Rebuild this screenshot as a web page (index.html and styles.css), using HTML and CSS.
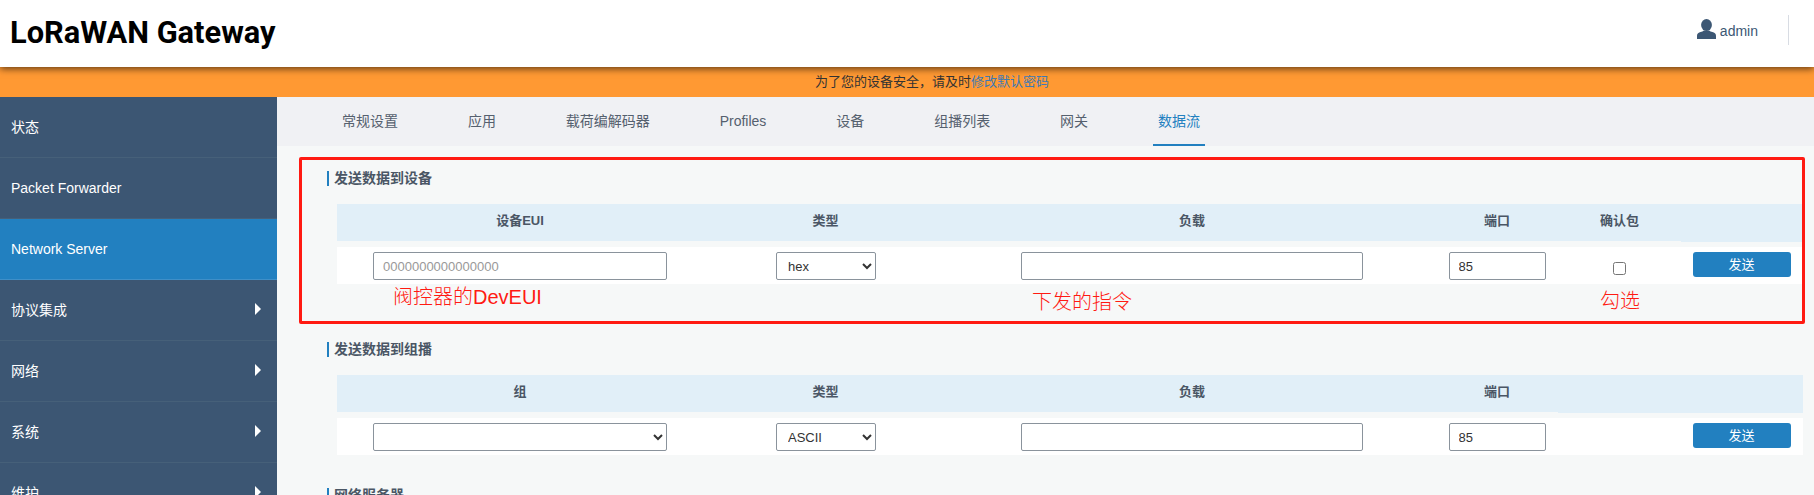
FILE: index.html
```html
<!DOCTYPE html>
<html lang="zh-CN">
<head>
<meta charset="utf-8">
<title>LoRaWAN Gateway</title>
<link rel="stylesheet" href="styles.css">
</head>
<body>
<header class="topbar">
  <h1 class="brand">LoRaWAN Gateway</h1>
  <div class="user">
    <svg class="user-icon" viewBox="0 0 19 20" aria-hidden="true"><ellipse cx="9.5" cy="6" rx="5.4" ry="6"/><path d="M0 20v-3.2c0-2.2 1.6-3 3.6-3.7 1.300-.5 2.500-1 3.200-1.700h5.400c.7.700 1.900 1.200 3.200 1.700 2 .7 3.600 1.500 3.600 3.700V20z"/></svg>
    <span class="user-name">admin</span>
    <span class="user-divider"></span>
  </div>
</header>
<div class="notice">为了您的设备安全，请及时<a class="notice-link" href="#">修改默认密码</a></div>
<div class="layout">
  <nav class="sidebar">
    <a class="nav-item nav-cjk" href="#">状态</a>
    <a class="nav-item" href="#">Packet Forwarder</a>
    <a class="nav-item active" href="#">Network Server</a>
    <a class="nav-item nav-cjk has-sub" href="#">协议集成</a>
    <a class="nav-item nav-cjk has-sub" href="#">网络</a>
    <a class="nav-item nav-cjk has-sub" href="#">系统</a>
    <a class="nav-item nav-cjk has-sub" href="#">维护</a>
  </nav>
  <main class="main">
    <div class="tabs">
      <a class="tab" href="#">常规设置</a>
      <a class="tab" href="#">应用</a>
      <a class="tab" href="#">载荷编解码器</a>
      <a class="tab" href="#">Profiles</a>
      <a class="tab" href="#">设备</a>
      <a class="tab" href="#">组播列表</a>
      <a class="tab" href="#">网关</a>
      <a class="tab current" href="#">数据流</a>
    </div>
    <div class="content">
      <section class="panel panel-first">
        <h2 class="panel-title">发送数据到设备</h2>
        <div class="grid head">
          <div class="cell">设备EUI</div>
          <div class="cell">类型</div>
          <div class="cell">负载</div>
          <div class="cell">端口</div>
          <div class="cell">确认包</div>
          <div class="cell cell-tall"></div>
        </div>
        <div class="grid row">
          <input class="field field-eui" type="text" placeholder="0000000000000000">
          <select class="field field-type"><option>hex</option></select>
          <input class="field field-payload" type="text">
          <input class="field field-port" type="text" value="85">
          <input class="confirm" type="checkbox">
          <button class="send" type="button">发送</button>
        </div>
      </section>
      <section class="panel">
        <h2 class="panel-title">发送数据到组播</h2>
        <div class="grid head">
          <div class="cell">组</div>
          <div class="cell">类型</div>
          <div class="cell">负载</div>
          <div class="cell">端口</div>
          <div class="cell cell-tall cell-wide"></div>
        </div>
        <div class="grid row">
          <select class="field field-eui"><option></option></select>
          <select class="field field-type"><option>ASCII</option></select>
          <input class="field field-payload" type="text">
          <input class="field field-port" type="text" value="85">
          <span></span>
          <button class="send" type="button">发送</button>
        </div>
      </section>
      <section class="panel">
        <h2 class="panel-title">网络服务器</h2>
      </section>
      <div class="callout"></div>
      <span class="note note-eui">阀控器的DevEUI</span>
      <span class="note note-cmd">下发的指令</span>
      <span class="note note-check">勾选</span>
    </div>
  </main>
</div>
</body>
</html>
```
FILE: styles.css
```css
* { box-sizing: border-box; }
html, body { margin: 0; height: 100%; }
body {
  display: flex;
  flex-direction: column;
  overflow: hidden;
  font-family: "Liberation Sans", "Noto Sans CJK SC", sans-serif;
  font-size: 14px;
  color: #4a5665;
  background: #f6f8f8;
}
a { text-decoration: none; }

.topbar {
  position: relative;
  z-index: 2;
  flex: none;
  height: 67px;
  display: flex;
  align-items: center;
  justify-content: space-between;
  padding: 0 25px 0 10px;
  background: #fff;
  box-shadow: 0 2px 7px rgba(0, 0, 0, .6);
}
.brand {
  margin: -2px 0 0;
  font-family: Roboto, "Liberation Sans", sans-serif;
  font-size: 30.8px;
  font-weight: 700;
  color: #000;
}
.user { display: flex; align-items: center; margin-bottom: 7px; }
.user-icon { width: 19px; height: 20px; fill: #3c5774; margin-right: 4px; margin-top: -2px; }
.user-name { color: #3c5774; font-size: 14px; margin-top: 1px; }
.user-divider { width: 1px; height: 30px; margin-left: 30px; background: #d8dce3; }

.notice {
  flex: none;
  height: 30px;
  line-height: 29px;
  padding-left: 50px;
  text-align: center;
  font-size: 13px;
  color: #333;
  background: #ff9933;
}
.notice-link { color: #3d7ab5; }

.layout { flex: 1; display: flex; min-height: 0; }

.sidebar {
  flex: none;
  width: 277px;
  background: #3c5673;
}
.nav-item {
  position: relative;
  display: flex;
  align-items: center;
  height: 61px;
  padding-left: 11px;
  color: #fff;
  font-size: 14px;
  border-bottom: 1px solid #466079;
}
.nav-cjk { padding-bottom: 2px; }
.nav-item.active { background: #2280c0; border-bottom-color: #3f8fc8; }
.nav-item.has-sub::after {
  content: "";
  position: absolute;
  left: 255px;
  top: 23px;
  border-left: 6px solid #fff;
  border-top: 6px solid transparent;
  border-bottom: 6px solid transparent;
}

.main { flex: 1; min-width: 0; display: flex; flex-direction: column; }

.tabs {
  flex: none;
  height: 49px;
  display: flex;
  gap: 59.9px;
  padding-left: 60px;
  background: #f0f1f4;
}
.tab {
  height: 49px;
  line-height: 48px;
  padding: 0 5px;
  color: #55606e;
  font-size: 14px;
}
.tab.current { color: #2280c0; border-bottom: 2px solid #2280c0; }

.content { position: relative; flex: 1; padding: 25px 11px 0 60px; }

.panel { margin-bottom: 33px; }
.panel-first { margin-bottom: 58px; }
.panel-title {
  margin: 0 0 18px -10px;
  height: 15px;
  padding-left: 5px;
  border-left: 2px solid #2280c0;
  font-size: 14px;
  line-height: 15px;
  font-weight: 700;
  color: #4a5665;
}

.grid {
  display: grid;
  grid-template-columns: 366px 245px 488px 122px 123px 122px;
}
.head { align-items: start; color: #4a5665; font-size: 13px; font-weight: 700; }
.cell {
  height: 37px;
  line-height: 34px;
  text-align: center;
  background: #e1eff8;
}
.cell-tall { height: 38px; }
.cell-wide { grid-column: span 2; }

.row {
  margin-top: 5px;
  height: 37px;
  padding-top: 5px;
  align-items: start;
  justify-items: center;
  background: #fff;
}
.field {
  height: 28px;
  padding: 0 9px;
  border: 1px solid #8a939c;
  border-radius: 2px;
  background: #fff;
  color: #333;
  font-family: inherit;
  font-size: 13px;
}
.field::placeholder { color: #999; }
.field-eui { width: 294px; }
.field-type { width: 100px; margin-left: 1px; padding: 0 7px; }
.field-payload { width: 342px; }
.field-port { width: 97px; }
.confirm { width: 13px; height: 13px; margin: 10px 0 0; }
.send {
  width: 98px;
  height: 25px;
  margin-right: 1px;
  padding: 0 0 2px;
  border: 0;
  border-radius: 3px;
  background: #2280c0;
  color: #fff;
  font-family: inherit;
  font-size: 13px;
}

.callout {
  position: absolute;
  left: 22px;
  top: 11px;
  width: 1506px;
  height: 167px;
  border: 3px solid #ff1a12;
  border-radius: 2px;
  pointer-events: none;
}
.note {
  position: absolute;
  font-size: 20px;
  font-weight: 300;
  line-height: 24px;
  color: #ff1a12;
  white-space: nowrap;
}
.note-eui { left: 116px; top: 139px; }
.note-cmd { left: 755px; top: 144px; }
.note-check { left: 1323px; top: 143px; }
```
